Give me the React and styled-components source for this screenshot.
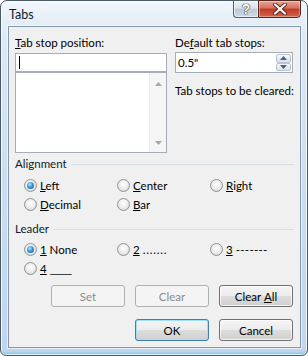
import React from "react";
import styled, { createGlobalStyle } from "styled-components";

const GlobalStyle = createGlobalStyle`
  html, body { margin: 0; padding: 0; background: #fff; }
  body {
    font-family: "Segoe UI", Lato, "Noto Sans", sans-serif;
    font-size: 11.5px;
    color: #000;
  }
`;

const Window = styled.div`
  box-sizing: border-box;
  width: 308px;
  height: 356px;
  display: flex;
  flex-direction: column;
  padding: 0 6px 7px 7px;
  border: 1px solid #4b5867;
  border-radius: 7px 7px 6px 6px;
  background: linear-gradient(180deg, #f1f6fb 0%, #dde9f5 10%, #cadcf0 55%, #bfd6ee 100%);
  box-shadow: inset 0 0 0 1px rgba(255, 255, 255, 0.8), inset 0 -3px 2px -1px #62cff3;
`;

const TitleBar = styled.div`
  display: flex;
  align-items: flex-start;
  height: 25px;
  flex-shrink: 0;
`;

const Caption = styled.div`
  padding: 6px 0 0 1px;
  line-height: 16px;
  font-size: 12.5px;
  color: #0b1a2b;
`;

const CaptionButtons = styled.div`
  display: flex;
  margin-left: auto;
  margin-top: -1px;
`;

const HelpButton = styled.div`
  box-sizing: border-box;
  width: 25px;
  height: 18px;
  display: flex;
  align-items: center;
  justify-content: center;
  border: 1px solid #56606c;
  border-right: none;
  border-radius: 0 0 0 4px;
  background: linear-gradient(180deg, #eef2f6 0%, #d9e1ea 45%, #bcc8d5 50%, #cfdae6 100%);
  box-shadow: inset 0 0 0 1px rgba(255, 255, 255, 0.55);
  color: #fff;
  font-family: "Liberation Sans", sans-serif;
  font-size: 14px;
  font-weight: bold;
  text-shadow: 0 0 1px #333, 0 0 1px #333, 0 0 1px #333;
`;

const CloseButton = styled.div`
  box-sizing: border-box;
  width: 43px;
  height: 18px;
  display: flex;
  align-items: center;
  justify-content: center;
  border: 1px solid #4f2a25;
  border-radius: 0 0 4px 0;
  background: linear-gradient(180deg, #eba597 0%, #d66e5c 45%, #c03a24 50%, #d4644a 100%);
  box-shadow: inset 0 0 0 1px rgba(255, 255, 255, 0.35);
`;

const Client = styled.div`
  flex: 1;
  display: flex;
  flex-direction: column;
  padding: 8px 6px 0 6px;
  background: #f0f0f0;
  border: 1px solid #8597ab;
  box-shadow: 0 0 0 1px rgba(255, 255, 255, 0.6);
`;

const TopGrid = styled.div`
  display: grid;
  grid-template-columns: 152px 118px;
  column-gap: 8px;
`;

const Column = styled.div`
  display: flex;
  flex-direction: column;
`;

const FieldLabel = styled.div`
  line-height: 16px;
  height: 16px;
  margin-top: ${(p) => p.$top || 0}px;
  margin-bottom: ${(p) => p.$bottom || 0}px;
  white-space: nowrap;
`;

const TextBox = styled.div`
  box-sizing: border-box;
  height: 19px;
  display: flex;
  align-items: center;
  padding-left: 3px;
  background: #fff;
  border: 1px solid #a7adb6;
`;

const Caret = styled.span`
  width: 1px;
  height: 13px;
  background: #000;
`;

const ListBox = styled.div`
  box-sizing: border-box;
  height: 81px;
  display: flex;
  background: #fff;
  border: 1px solid #a7adb6;
`;

const ScrollBar = styled.div`
  margin-left: auto;
  width: 16px;
  display: flex;
  flex-direction: column;
  justify-content: space-between;
  align-items: center;
  padding: 9px 0 7px;
  background: #f5f5f5;
  border-left: 1px solid #ececec;
`;

const SpinBox = styled.div`
  box-sizing: border-box;
  height: 21px;
  display: flex;
  background: #fff;
  border: 1px solid #a7adb6;
`;

const SpinValue = styled.div`
  padding-left: 2px;
  line-height: 19px;
`;

const SpinButtons = styled.div`
  margin-left: auto;
  width: 15px;
  display: flex;
  flex-direction: column;
  padding: 1px 1px 1px 0;
`;

const SpinArrow = styled.div`
  flex: 1;
  display: flex;
  align-items: center;
  justify-content: center;
  border: 1px solid #b9c4d2;
  border-radius: 2px;
  background: linear-gradient(180deg, #f6f8fa 0%, #e6ebf1 50%, #d9e1ea 100%);
`;

const Group = styled.div`
  display: flex;
  flex-direction: column;
  margin-top: ${(p) => p.$top}px;
`;

const GroupHeader = styled.div`
  display: flex;
  align-items: center;
  gap: 4px;
  line-height: 16px;
  color: #0d1b2e;

  &::after {
    content: "";
    flex: 1;
    height: 1px;
    background: #d5dfe7;
  }
`;

const RadioGrid = styled.div`
  display: grid;
  grid-template-columns: repeat(3, 93px);
  grid-auto-rows: 19px;
  padding-left: 9px;
  margin-top: ${(p) => p.$top}px;
`;

const RadioItem = styled.div`
  display: flex;
  align-items: center;
  gap: 3px;
  white-space: nowrap;
`;

const RadioDot = styled.span`
  box-sizing: border-box;
  width: 13px;
  height: 13px;
  border-radius: 50%;
  display: flex;
  align-items: center;
  justify-content: center;
  border: 1px solid #8f9398;
  background: radial-gradient(circle at 50% 40%, #ffffff 0%, #eeeeee 45%, #cfcfcf 100%);

  &::after {
    content: "";
    display: ${(p) => (p.$checked ? "block" : "none")};
    width: 7px;
    height: 7px;
    border-radius: 50%;
    background: radial-gradient(circle at 40% 35%, #b4e8ff 0%, #3d9ad8 45%, #0d4e92 100%);
  }
`;

const Leader = styled.span`
  margin-left: 3px;
  letter-spacing: ${(p) => p.$spacing || 0}px;
`;

const ButtonRow = styled.div`
  display: flex;
  justify-content: flex-end;
  gap: 10px;
  padding-right: 1px;
  margin-top: ${(p) => p.$top}px;
`;

const Button = styled.div`
  box-sizing: border-box;
  width: 74px;
  height: 22px;
  display: flex;
  align-items: center;
  justify-content: center;
  border-radius: 3px;
  border: 1px solid ${(p) => (p.$disabled ? "#adb2b5" : p.$default ? "#3c7fb1" : "#707070")};
  color: ${(p) => (p.$disabled ? "#8b8b8b" : "#000")};
  background: ${(p) =>
    p.$disabled
      ? "#f4f4f4"
      : "linear-gradient(180deg, #f4f4f4 0%, #ececec 48%, #dddddd 52%, #cfcfcf 100%)"};
  box-shadow: ${(p) =>
    p.$disabled
      ? "none"
      : p.$default
      ? "inset 0 0 0 1px #9fe0f8"
      : "inset 0 0 0 1px rgba(255, 255, 255, 0.75)"};
`;

const ArrowIcon = ({ up, color }) => (
  <svg width="7" height="4" viewBox="0 0 7 4">
    <path d={up ? "M0 4 L3.5 0 L7 4 Z" : "M0 0 L7 0 L3.5 4 Z"} fill={color} />
  </svg>
);

const CloseGlyph = () => (
  <svg width="14" height="12" viewBox="0 0 14 12">
    <path d="M2 1.5 L12 10.5 M12 1.5 L2 10.5" stroke="#5a2218" strokeWidth="4" strokeLinecap="round" />
    <path d="M2 1.5 L12 10.5 M12 1.5 L2 10.5" stroke="#fff" strokeWidth="2.2" strokeLinecap="round" />
  </svg>
);

const Radio = ({ checked, children }) => (
  <RadioItem>
    <RadioDot $checked={checked} />
    <span>{children}</span>
  </RadioItem>
);

export default function App() {
  return (
    <>
      <GlobalStyle />
      <Window>
        <TitleBar>
          <Caption>Tabs</Caption>
          <CaptionButtons>
            <HelpButton>?</HelpButton>
            <CloseButton>
              <CloseGlyph />
            </CloseButton>
          </CaptionButtons>
        </TitleBar>

        <Client>
          <TopGrid>
            <Column>
              <FieldLabel $bottom={2}>
                <u>T</u>ab stop position:
              </FieldLabel>
              <TextBox>
                <Caret />
              </TextBox>
              <ListBox>
                <ScrollBar>
                  <ArrowIcon up color="#a8a8a8" />
                  <ArrowIcon color="#a8a8a8" />
                </ScrollBar>
              </ListBox>
            </Column>
            <Column>
              <FieldLabel $bottom={1}>
                De<u>f</u>ault tab stops:
              </FieldLabel>
              <SpinBox>
                <SpinValue>0.5"</SpinValue>
                <SpinButtons>
                  <SpinArrow>
                    <ArrowIcon up color="#4a5f86" />
                  </SpinArrow>
                  <SpinArrow>
                    <ArrowIcon color="#4a5f86" />
                  </SpinArrow>
                </SpinButtons>
              </SpinBox>
              <FieldLabel $top={10}>Tab stops to be cleared:</FieldLabel>
            </Column>
          </TopGrid>

          <Group $top={3}>
            <GroupHeader>Alignment</GroupHeader>
            <RadioGrid $top={4}>
              <Radio checked>
                <u>L</u>eft
              </Radio>
              <Radio>
                <u>C</u>enter
              </Radio>
              <Radio>
                <u>R</u>ight
              </Radio>
              <Radio>
                <u>D</u>ecimal
              </Radio>
              <Radio>
                <u>B</u>ar
              </Radio>
            </RadioGrid>
          </Group>

          <Group $top={7}>
            <GroupHeader>Leader</GroupHeader>
            <RadioGrid $top={3}>
              <Radio checked>
                <u>1</u> None
              </Radio>
              <Radio>
                <u>2</u>
                <Leader $spacing={0.8}>.......</Leader>
              </Radio>
              <Radio>
                <u>3</u>
                <Leader $spacing={0.3}>-------</Leader>
              </Radio>
              <Radio>
                <u>4</u>
                <Leader $spacing={-1}>_____</Leader>
              </Radio>
            </RadioGrid>
          </Group>

          <ButtonRow $top={7}>
            <Button $disabled>Set</Button>
            <Button $disabled>Clear</Button>
            <Button>
              Clear&nbsp;<u>A</u>ll
            </Button>
          </ButtonRow>
          <ButtonRow $top={12}>
            <Button $default>OK</Button>
            <Button>Cancel</Button>
          </ButtonRow>
        </Client>
      </Window>
    </>
  );
}
